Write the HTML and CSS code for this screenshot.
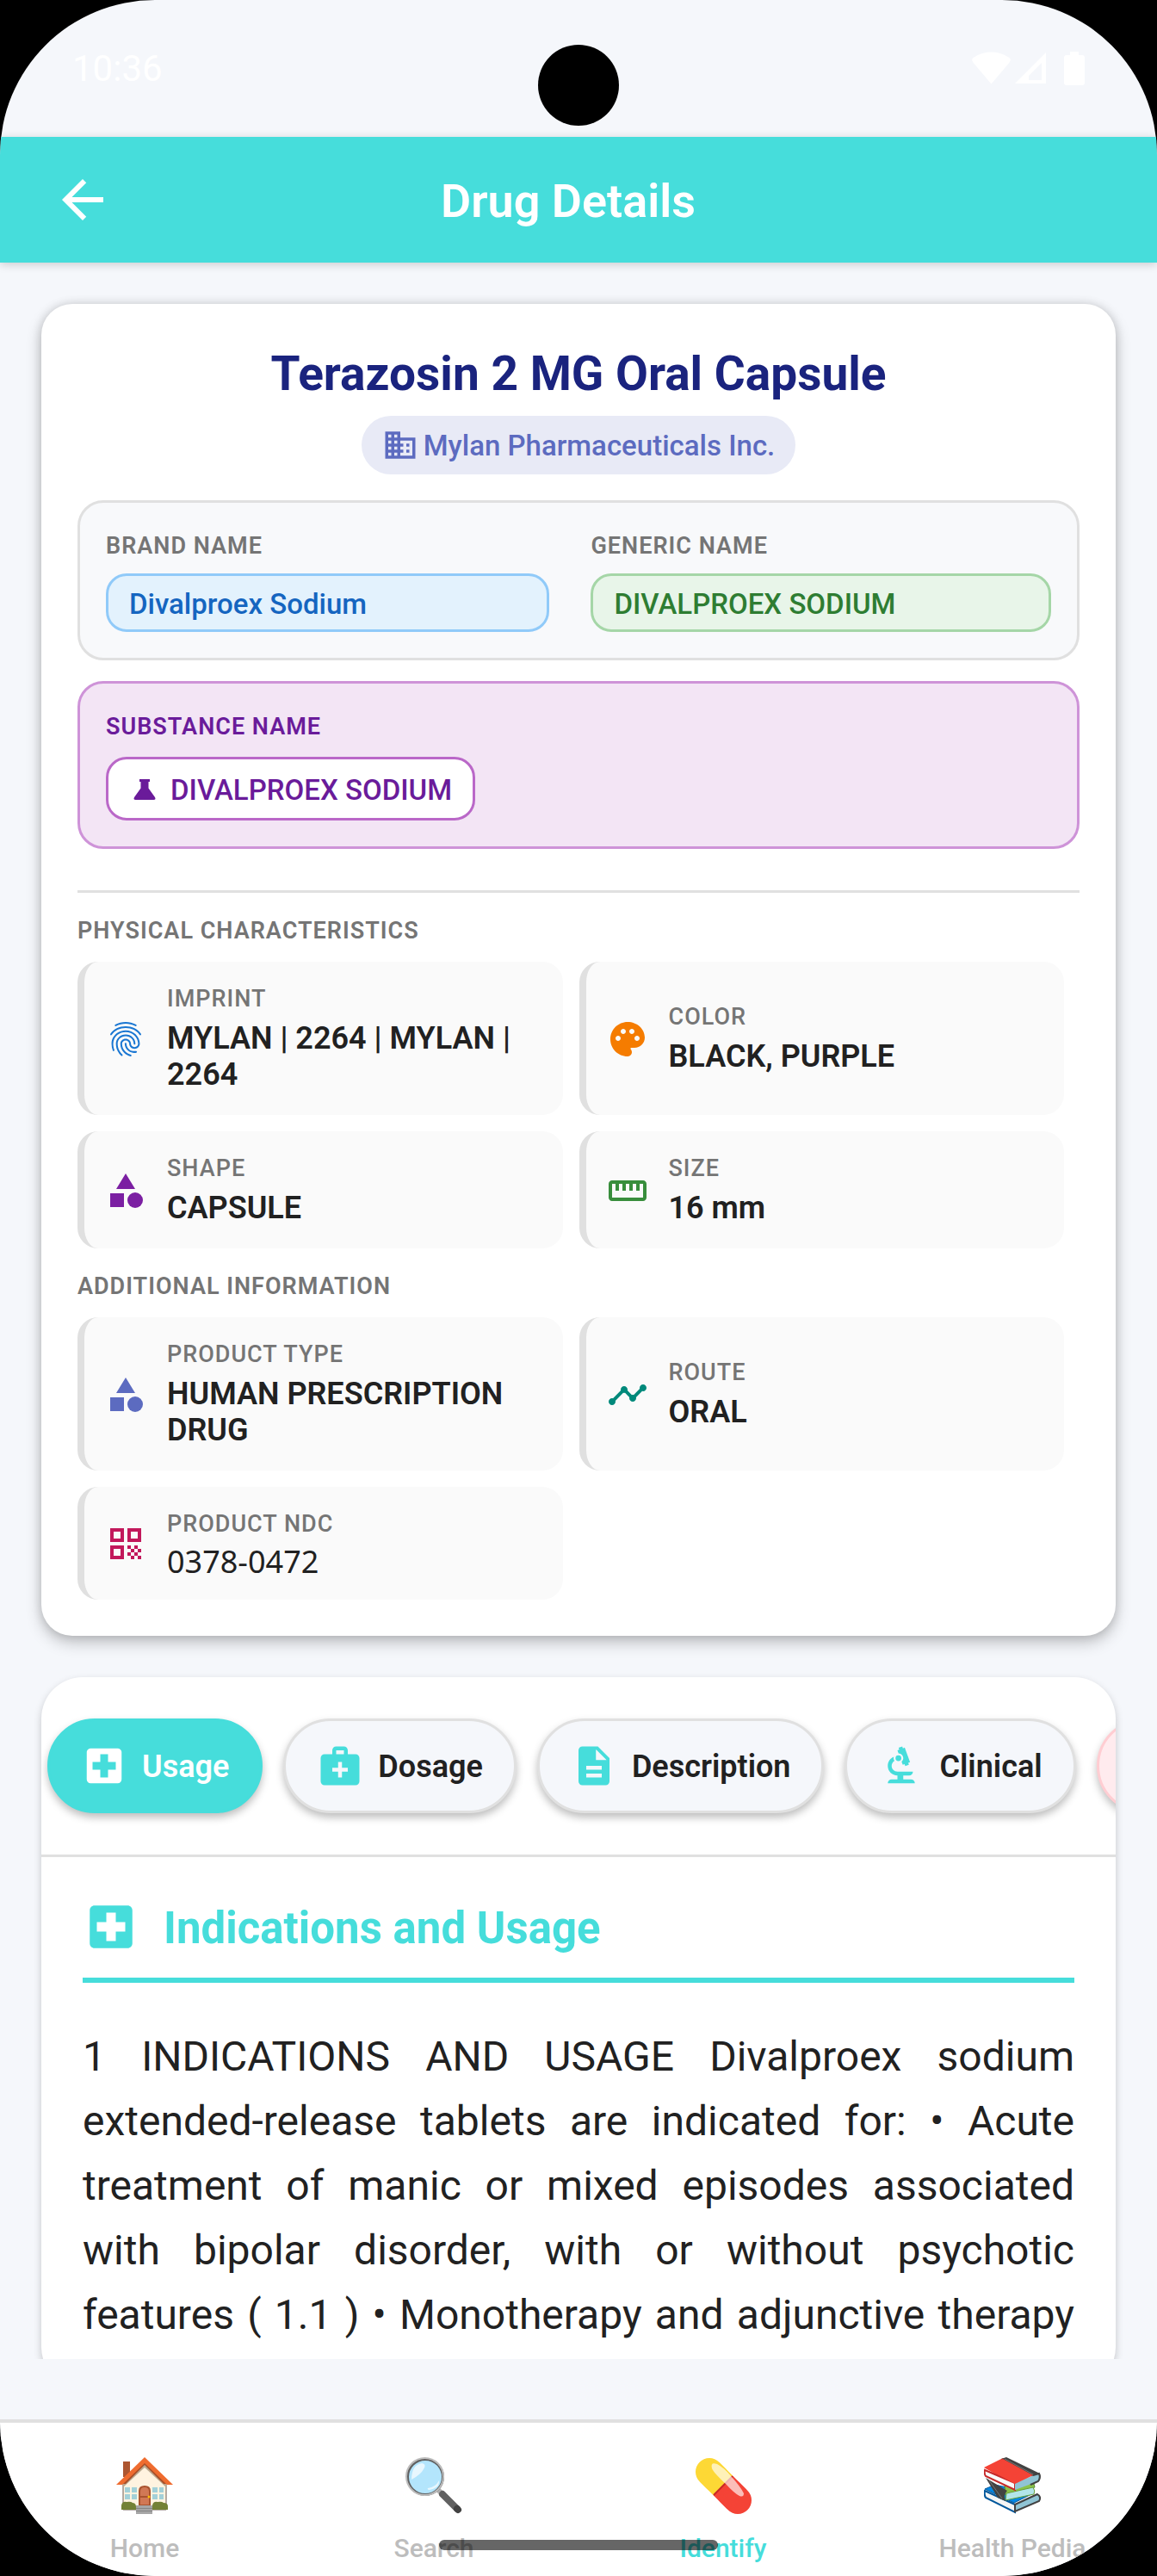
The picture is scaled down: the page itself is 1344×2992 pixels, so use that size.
FILE: index.html
```html
<!DOCTYPE html>
<html lang="en">

<head>
    <title>Drug Details</title>
    <meta charset="UTF-8">
    <meta name="viewport" content="width=device-width, initial-scale=1">
    <link rel="stylesheet" href="styles.css">
</head>

<body>
    <div class="screen">
        <div class="statusbar">
            <span class="time">10:36</span>
            <span class="camera"></span>
            <div class="sysicons">
                <svg class="wifi" viewBox="0 0 46 38"><path d="M23 38L2 13C-1 9 0 8 3 6C14-2 32-2 43 6c3 2 4 3 1 7z" /></svg>
                <svg class="signal" viewBox="0 0 36 36"><path fill-rule="evenodd" d="M36 0v36H0zM31 12L16 27v5h15z" /></svg>
                <svg class="battery" viewBox="0 0 24 39"><path d="M7 0h10v4h4q3 0 3 3v29q0 3-3 3H3q-3 0-3-3V7q0-3 3-3h4z" /></svg>
            </div>
        </div>

        <header class="topbar">
            <button class="back" type="button" aria-label="Back">
                <svg viewBox="0 0 24 24"><path d="M20 11H7.83l5.59-5.59L12 4l-8 8 8 8 1.41-1.41L7.83 13H20v-2z" /></svg>
            </button>
            <h1>Drug Details</h1>
            <span class="spacer"></span>
        </header>

        <main>
            <section class="card summary">
                <h2>Terazosin 2 MG Oral Capsule</h2>
                <div class="maker">
                    <svg viewBox="0 0 24 24"><path d="M12 7V3H2v18h20V7H12zM6 19H4v-2h2v2zm0-4H4v-2h2v2zm0-4H4V9h2v2zm0-4H4V5h2v2zm4 12H8v-2h2v2zm0-4H8v-2h2v2zm0-4H8V9h2v2zm0-4H8V5h2v2zm10 12h-8v-2h2v-2h-2v-2h2v-2h-2V9h8v10zm-2-8h-2v2h2v-2zm0 4h-2v2h2v-2z" /></svg>
                    <span>Mylan Pharmaceuticals Inc.</span>
                </div>

                <div class="box names">
                    <div>
                        <div class="label">BRAND NAME</div>
                        <div class="tag brand">Divalproex Sodium</div>
                    </div>
                    <div>
                        <div class="label">GENERIC NAME</div>
                        <div class="tag generic">DIVALPROEX SODIUM</div>
                    </div>
                </div>

                <div class="box substance">
                    <div class="label">SUBSTANCE NAME</div>
                    <div class="tag">
                        <svg viewBox="0 0 24 24"><path d="M8 4h8v2h-1v5l5 7q1 2-1 2H5q-2 0-1-2l5-7V6H8z" /></svg>
                        <span>DIVALPROEX SODIUM</span>
                    </div>
                </div>

                <hr>

                <h3>PHYSICAL CHARACTERISTICS</h3>
                <div class="facts">
                    <div class="fact">
                        <svg class="blue" viewBox="0 0 24 24"><path d="M17.81 4.47c-.08 0-.16-.02-.23-.06C15.66 3.42 14 3 12.01 3c-1.98 0-3.86.47-5.57 1.41-.24.13-.54.04-.68-.2-.13-.24-.04-.55.2-.68C7.82 2.52 9.86 2 12.01 2c2.13 0 3.99.47 6.03 1.52.25.13.34.43.21.67-.09.18-.26.28-.44.28zM3.5 9.72c-.1 0-.2-.03-.29-.09-.23-.16-.28-.47-.12-.7.99-1.4 2.25-2.5 3.75-3.27C9.98 4.04 14 4.03 17.15 5.65c1.5.77 2.76 1.86 3.75 3.25.16.22.11.54-.12.7-.23.16-.54.11-.7-.12-.9-1.26-2.04-2.25-3.39-2.94-2.87-1.47-6.54-1.47-9.4.01-1.36.7-2.5 1.7-3.4 2.96-.08.14-.23.21-.39.21zm6.25 12.07c-.13 0-.26-.05-.35-.15-.87-.87-1.34-1.43-2.01-2.64-.69-1.23-1.05-2.73-1.05-4.34 0-2.97 2.54-5.39 5.66-5.39s5.66 2.42 5.66 5.39c0 .28-.22.5-.5.5s-.5-.22-.5-.5c0-2.42-2.09-4.39-4.66-4.39-2.57 0-4.66 1.97-4.66 4.39 0 1.44.32 2.77.93 3.85.64 1.15 1.08 1.64 1.85 2.42.19.2.19.51 0 .71-.11.1-.24.15-.37.15zm7.17-1.85c-1.19 0-2.24-.3-3.1-.89-1.49-1.01-2.38-2.65-2.38-4.39 0-.28.22-.5.5-.5s.5.22.5.5c0 1.41.72 2.74 1.94 3.56.71.48 1.54.71 2.54.71.24 0 .64-.03 1.04-.1.27-.05.53.13.58.41.05.27-.13.53-.41.58-.57.11-1.07.12-1.21.12zM14.91 22c-.04 0-.09-.01-.13-.02-1.59-.44-2.63-1.03-3.72-2.1-1.4-1.39-2.17-3.24-2.17-5.22 0-1.62 1.38-2.94 3.08-2.94 1.7 0 3.08 1.32 3.08 2.94 0 1.07.93 1.94 2.08 1.94s2.08-.87 2.08-1.94c0-3.77-3.25-6.83-7.25-6.83-2.84 0-5.44 1.58-6.61 4.03-.39.81-.59 1.76-.59 2.8 0 .78.07 2.01.67 3.61.1.26-.03.55-.29.64-.26.1-.55-.04-.64-.29-.49-1.31-.73-2.61-.73-3.96 0-1.2.23-2.29.68-3.24 1.33-2.79 4.28-4.6 7.51-4.6 4.55 0 8.25 3.51 8.25 7.83 0 1.62-1.38 2.94-3.08 2.94s-3.08-1.32-3.08-2.94c0-1.07-.93-1.94-2.08-1.94s-2.08.87-2.08 1.94c0 1.71.66 3.31 1.87 4.51.95.94 1.86 1.46 3.27 1.85.27.07.42.35.35.61-.05.23-.26.38-.47.38z" /></svg>
                        <div>
                            <div class="name">IMPRINT</div>
                            <div class="value">MYLAN | 2264 | MYLAN | 2264</div>
                        </div>
                    </div>
                    <div class="fact">
                        <svg class="orange" viewBox="0 0 24 24"><path d="M12 2C6.49 2 2 6.49 2 12s4.49 10 10 10c1.38 0 2.5-1.12 2.5-2.5 0-.61-.23-1.2-.64-1.67-.08-.1-.13-.21-.13-.33 0-.28.22-.5.5-.5H16c3.31 0 6-2.69 6-6 0-4.96-4.49-9-10-9zm5.5 11c-.83 0-1.5-.67-1.5-1.5s.67-1.5 1.5-1.5 1.5.67 1.5 1.5-.67 1.5-1.5 1.5zm-3-4c-.83 0-1.5-.67-1.5-1.5S13.67 6 14.5 6s1.5.67 1.5 1.5S15.33 9 14.5 9zM5 11.5c0-.83.67-1.5 1.5-1.5s1.5.67 1.5 1.5S7.33 13 6.5 13 5 12.33 5 11.5zm6-4c0 .83-.67 1.5-1.5 1.5S8 8.33 8 7.5 8.67 6 9.5 6s1.5.67 1.5 1.5z" /></svg>
                        <div>
                            <div class="name">COLOR</div>
                            <div class="value">BLACK, PURPLE</div>
                        </div>
                    </div>
                    <div class="fact">
                        <svg class="purple" viewBox="0 0 24 24"><path d="M12 2l-5.5 9h11zM3 13.5h8v8H3z" /><circle cx="17.5" cy="17.5" r="4.5" /></svg>
                        <div>
                            <div class="name">SHAPE</div>
                            <div class="value">CAPSULE</div>
                        </div>
                    </div>
                    <div class="fact">
                        <svg class="green" viewBox="0 0 24 24"><path d="M21 6H3c-1.1 0-2 .9-2 2v8c0 1.1.9 2 2 2h18c1.1 0 2-.9 2-2V8c0-1.1-.9-2-2-2zm0 10H3V8h2v4h2V8h2v4h2V8h2v4h2V8h2v4h2V8h2v8z" /></svg>
                        <div>
                            <div class="name">SIZE</div>
                            <div class="value">16 mm</div>
                        </div>
                    </div>
                </div>

                <h3>ADDITIONAL INFORMATION</h3>
                <div class="facts">
                    <div class="fact">
                        <svg class="indigo" viewBox="0 0 24 24"><path d="M12 2l-5.5 9h11zM3 13.5h8v8H3z" /><circle cx="17.5" cy="17.5" r="4.5" /></svg>
                        <div>
                            <div class="name">PRODUCT TYPE</div>
                            <div class="value">HUMAN PRESCRIPTION DRUG</div>
                        </div>
                    </div>
                    <div class="fact">
                        <svg class="teal" viewBox="0 0 24 24"><path d="M23 8c0 1.1-.9 2-2 2-.18 0-.35-.02-.51-.07l-3.56 3.55c.05.16.07.34.07.52 0 1.1-.9 2-2 2s-2-.9-2-2c0-.18.02-.36.07-.52l-2.55-2.55c-.16.05-.34.07-.52.07s-.36-.02-.52-.07l-4.55 4.56c.05.16.07.33.07.51 0 1.1-.9 2-2 2s-2-.9-2-2 .9-2 2-2c.18 0 .35.02.51.07l4.56-4.55C8.02 9.36 8 9.18 8 9c0-1.1.9-2 2-2s2 .9 2 2c0 .18-.02.36-.07.52l2.55 2.55c.16-.05.34-.07.52-.07s.36.02.52.07l3.55-3.56C19.02 8.35 19 8.18 19 8c0-1.1.9-2 2-2s2 .9 2 2z" /></svg>
                        <div>
                            <div class="name">ROUTE</div>
                            <div class="value">ORAL</div>
                        </div>
                    </div>
                    <div class="fact">
                        <svg class="pink" viewBox="0 0 24 24"><path d="M3 11h8V3H3v8zm2-6h4v4H5V5zM3 21h8v-8H3v8zm2-6h4v4H5v-4zM13 3v8h8V3h-8zm6 6h-4V5h4v4zM19 19h2v2h-2zM13 13h2v2h-2zM15 15h2v2h-2zM13 17h2v2h-2zM15 19h2v2h-2zM17 17h2v2h-2zM17 13h2v2h-2zM19 15h2v2h-2z" /></svg>
                        <div>
                            <div class="name">PRODUCT NDC</div>
                            <div class="value code">0378-0472</div>
                        </div>
                    </div>
                </div>
            </section>

            <section class="card label-info">
                <div class="tabs">
                    <button class="tab active" type="button">
                        <svg viewBox="0 0 24 24"><path d="M19 3H5c-1.1 0-1.99.9-1.99 2L3 19c0 1.1.9 2 2 2h14c1.1 0 2-.9 2-2V5c0-1.1-.9-2-2-2zm-1 11h-4v4h-4v-4H6v-4h4V6h4v4h4v4z" /></svg>
                        <span>Usage</span>
                    </button>
                    <button class="tab" type="button">
                        <svg viewBox="0 0 24 24"><path d="M20 6h-4V4c0-1.1-.9-2-2-2h-4c-1.1 0-2 .9-2 2v2H4c-1.1 0-2 .9-2 2v12c0 1.1.9 2 2 2h16c1.1 0 2-.9 2-2V8c0-1.1-.9-2-2-2zM10 4h4v2h-4V4zm6 11h-3v3h-2v-3H8v-2h3v-3h2v3h3v2z" /></svg>
                        <span>Dosage</span>
                    </button>
                    <button class="tab" type="button">
                        <svg viewBox="0 0 24 24"><path d="M14 2H6c-1.1 0-1.99.9-1.99 2L4 20c0 1.1.89 2 1.99 2H18c1.1 0 2-.9 2-2V8l-6-6zm2 16H8v-2h8v2zm0-4H8v-2h8v2zm-3-5V3.5L18.5 9H13z" /></svg>
                        <span>Description</span>
                    </button>
                    <button class="tab" type="button">
                        <svg viewBox="0 0 24 24"><path d="M7 19c-1.1 0-2 .9-2 2h14c0-1.1-.9-2-2-2h-4v-2h3c1.1 0 2-.9 2-2h-8c-1.66 0-3-1.34-3-3 0-1.09.59-2.04 1.46-2.56C8.17 9.03 8 8.54 8 8c0-.21.04-.42.09-.62C6.28 8.13 5 9.92 5 12c0 2.76 2.24 5 5 5v2H7z" /><path d="M10.56 5.51C11.91 5.54 13 6.64 13 8c0 .75-.33 1.41-.85 1.87l.59 1.62.94-.34.34.94 1.88-.68-.34-.94.94-.34-2.74-7.52-.94.34-.34-.94-1.88.68.34.94-.94.35.56 1.53z" /><circle cx="10.5" cy="8" r="1.5" /></svg>
                        <span>Clinical</span>
                    </button>
                    <button class="tab warn" type="button" aria-label="Warnings"></button>
                </div>

                <article>
                    <h2>
                        <svg viewBox="0 0 24 24"><path d="M19 3H5c-1.1 0-1.99.9-1.99 2L3 19c0 1.1.9 2 2 2h14c1.1 0 2-.9 2-2V5c0-1.1-.9-2-2-2zm-1 11h-4v4h-4v-4H6v-4h4V6h4v4h4v4z" /></svg>
                        <span>Indications and Usage</span>
                    </h2>
                    <p>1 INDICATIONS AND USAGE Divalproex sodium extended-release tablets are indicated for: • Acute treatment of manic or mixed episodes associated with bipolar disorder, with or without psychotic features ( 1.1 ) • Monotherapy and adjunctive therapy</p>
                </article>
            </section>
        </main>

        <nav>
            <a href="#home">
                <svg viewBox="0 0 66 66">
                    <path fill="#ad5630" d="M8 5h8v18H8z" />
                    <path fill="#fff3e0" stroke="#6d5a50" d="M8 61V29L33 8l25 21v32z" />
                    <path fill="#bcaa91" d="M33 6L8 28v7l25-23 25 23v-7z" />
                    <path fill="#a84f29" d="M33 4L7 31h4l22-22 22 22h4z" />
                    <path fill="#ef6c2f" d="M33 0L0 32h7L33 7l26 25h7z" />
                    <path fill="#a3d0d8" d="M10 35h6v6h-6zM18 35h6v6h-6zM10 43h6v6h-6zM18 43h6v6h-6zM42 35h6v6h-6zM50 35h5v6h-5zM42 43h6v6h-6zM50 43h5v6h-5z" />
                    <path fill="#a9532f" d="M26 57V39q0-6 7-6t7 6v18z" />
                    <path fill="#d17855" d="M28 45v-5q0-5 5-5t5 5v5zM28 47h10v8H28z" />
                    <circle fill="#ffc107" cx="38" cy="46" r="1.5" />
                    <path fill="#738136" d="M6 61v-5q1-5 6-4 5-1 7 1 5 0 4 8zM42 61v-5q1-5 6-4 5-1 7 1 5 0 5 4v4z" />
                    <path fill="#a6a6a6" d="M23 56h19v10H23z" />
                    <path stroke="#858585" d="M23 59.500h19M23 62.500h19" />
                </svg>
                <span>Home</span>
            </a>
            <a href="#search">
                <svg viewBox="0 0 66 66">
                    <path stroke="#b0b0b0" stroke-width="6" d="M36 36l7 7" />
                    <path stroke="#616161" stroke-width="8" stroke-linecap="round" d="M43 43l17 17" />
                    <path stroke="#424242" stroke-width="8" stroke-linecap="round" d="M60 60l1 1" />
                    <circle fill="#b3e5fc" stroke="#616161" stroke-width="3" cx="23" cy="23" r="20.500" />
                    <circle fill="none" stroke="#bdbdbd" stroke-width="2" cx="22.500" cy="22.500" r="21.500" />
                    <path fill="#e8f7fe" d="M7 26Q7 9 19 7q6 1 2 7-3 6-14 12zM26 36q9-1 13-9 1 9-11 11-3 0-2-2z" />
                </svg>
                <span>Search</span>
            </a>
            <a class="active" href="#identify">
                <svg viewBox="0 0 66 66">
                    <path stroke="#fdd835" stroke-width="32" stroke-linecap="round" d="M17 17l8 8" />
                    <path stroke="#f44336" stroke-width="32" stroke-linecap="round" d="M41 41l9 9" />
                    <path stroke="#fdd835" stroke-width="32" d="M17 17l16 16" />
                    <path stroke="#f44336" stroke-width="32" d="M33 33l16 16" />
                    <path stroke="#c62828" stroke-width="2" d="M22 44l22-22" />
                    <path fill="#fff" fill-opacity=".65" d="M20 13q-2-8 6-5 8 4 17 15 10 11 14 19 0 5-5 3-6-3-16-14Q22 18 20 13z" />
                </svg>
                <span>Identify</span>
            </a>
            <a href="#pedia">
                <svg viewBox="0 0 66 66">
                    <path fill="#0288e5" stroke="#01579b" d="M1 37l12-5 44 10-22 11z" />
                    <path fill="#f5f5f5" stroke="#01579b" stroke-width="2" d="M1 39q-1 5 1 8l34 17v-9z" />
                    <path fill="#90c4d4" stroke="#424242" stroke-width="2" d="M36 55l26-12q5 3 2 8L36 63z" />
                    <path fill="#8bc34a" stroke="#558b2f" d="M24 33l34-2 1 4-34 9z" />
                    <path fill="#b2e5ea" stroke="#689f38" d="M26 42l31-7q3 4 1 8l-33 7z" />
                    <path fill="#424242" d="M2 24l25 15q-5 5-2 12l-9-4z" />
                    <path stroke="#757575" d="M6 27l15 21" />
                    <path fill="#f44336" d="M0 12L22 1l36 19-23 12z" />
                    <path fill="#424242" d="M20 2l6-2 39 19q2 5-1 9-1-5-8-5z" />
                    <path stroke="#757575" d="M24 2l35 19" />
                    <path fill="#fafafa" stroke="#c62828" stroke-width="2" d="M1 15q-1 4 1 7l34 16v-8z" />
                    <path fill="#90c4d4" d="M36 30l27-11q3 4 0 9L36 38z" />
                    <path fill="none" stroke="#424242" stroke-width="2" d="M57 21l7-2q2 5-1 9l-9 4" />
                    <path fill="#f44336" d="M1 12l21-10 35 19-21 10z" />
                </svg>
                <span>Health Pedia</span>
            </a>
        </nav>
        <div class="gesture"></div>
    </div>
</body>

</html>
```

FILE: styles.css
```css
* {
    box-sizing: border-box;
    padding: 0;
    margin: 0;
}

body {
    font-family: Roboto, sans-serif;
    color: #212121;
    background: #000;
}

svg {
    display: block;
    flex: none;
    fill: currentColor;
}

.screen {
    position: relative;
    display: flex;
    flex-direction: column;
    height: 100vh;
    border-radius: 180px;
    background: #f5f7fb;
    overflow: hidden;
}

/* status bar */

.statusbar {
    position: relative;
    display: flex;
    flex: none;
    justify-content: space-between;
    height: 159px;
    padding: 54px 84px 0;
    color: #fff;
}

.time {
    font-size: 42px;
    line-height: 52px;
}

.camera {
    position: absolute;
    top: 52px;
    left: 50%;
    width: 94px;
    height: 94px;
    border-radius: 50%;
    background: #000;
    transform: translateX(-50%);
}

.sysicons {
    display: flex;
    align-items: center;
    height: 50px;
    gap: 5px;
}

.wifi {
    width: 45px;
    height: 38px;
}

.signal {
    width: 36px;
    height: 36px;
}

.battery {
    width: 24px;
    height: 39px;
    margin-left: 16px;
}

/* header */

.topbar {
    position: relative;
    z-index: 2;
    display: flex;
    flex: none;
    align-items: center;
    justify-content: space-between;
    height: 146px;
    padding: 0 60px;
    color: #fff;
    background: #46dddb;
    box-shadow: 0 2px 10px rgba(0, 0, 0, .18);
}

.topbar h1 {
    padding-top: 3px;
    font-size: 54px;
    font-weight: 600;
    line-height: 64px;
}

.back {
    border: 0;
    color: inherit;
    background: none;
}

.back svg {
    width: 72px;
    height: 72px;
}

.spacer {
    width: 96px;
}

main {
    display: flex;
    flex: 1;
    flex-direction: column;
    gap: 48px;
    min-height: 0;
    margin-bottom: 70px;
    padding: 48px 48px 0;
    overflow: hidden;
}

.card {
    flex: none;
    background: #fff;
}

/* drug summary */

.summary {
    padding: 42px;
    border-radius: 36px;
    box-shadow: 0 8px 18px rgba(0, 0, 0, .22), 0 0 12px rgba(0, 0, 0, .14);
}

.summary h2 {
    margin-bottom: 9px;
    font-size: 55px;
    font-weight: 700;
    line-height: 79px;
    text-align: center;
    color: #1a237e;
}

.maker {
    display: flex;
    align-items: center;
    gap: 6px;
    width: fit-content;
    height: 68px;
    margin: 0 auto 30px;
    padding: 0 24px;
    border-radius: 36px;
    font-size: 33px;
    font-weight: 500;
    color: #5c6bc0;
    background: #e8eaf6;
}

.maker svg {
    width: 42px;
    height: 42px;
}

.box {
    padding: 34px 30px 30px;
    border: 3px solid #e0e0e0;
    border-radius: 30px;
    background: #f8f9fb;
}

.names {
    display: grid;
    grid-template-columns: 27fr 28fr;
    gap: 48px;
    margin-bottom: 24px;
}

.label {
    margin-bottom: 15px;
    font-size: 27px;
    font-weight: 600;
    line-height: 33px;
    letter-spacing: 1px;
    color: #757575;
}

.tag {
    display: flex;
    align-items: center;
    height: 68px;
    padding: 2px 24px 0;
    border: 3px solid;
    border-radius: 24px;
    font-size: 33px;
    font-weight: 500;
}

.brand {
    border-color: #90caf9;
    color: #1565c0;
    background: #e3f2fd;
}

.generic {
    border-color: #a5d6a7;
    color: #2e7d32;
    background: #e8f5e9;
}

.substance {
    border-color: #ce93d8;
    background: #f3e5f5;
}

.substance .label {
    margin-bottom: 18px;
    color: #6a1b9a;
}

.substance .tag {
    gap: 12px;
    width: fit-content;
    height: 74px;
    border-color: #ba68c8;
    color: #6a1b9a;
    background: #fff;
}

.substance svg {
    width: 36px;
    height: 36px;
}

hr {
    height: 3px;
    margin-top: 48px;
    border: 0;
    background: #e0e0e0;
}

h3 {
    margin: 28px 0 20px;
    font-size: 27px;
    font-weight: 600;
    line-height: 32px;
    letter-spacing: 1px;
    color: #757575;
}

.facts {
    display: grid;
    grid-template-columns: repeat(2, 1fr);
    gap: 19px;
    margin-right: 18px;
}

.fact {
    display: flex;
    align-items: center;
    gap: 24px;
    padding: 27px 24px 26px;
    border-left: 8px solid #e0e0e0;
    border-radius: 24px;
    background: #fafafa;
}

.fact svg {
    width: 48px;
    height: 48px;
}

.blue { color: #1976d2; }
.orange { color: #f57c00; }
.purple { color: #7b1fa2; }
.green { color: #388e3c; }
.indigo { color: #5c6bc0; }
.teal { color: #00897b; }
.pink { color: #c2185b; }

.name {
    margin-bottom: 9px;
    font-size: 27px;
    font-weight: 500;
    line-height: 32px;
    letter-spacing: 1px;
    color: #757575;
}

.value {
    font-size: 36px;
    font-weight: 600;
    line-height: 42px;
}

.code {
    font-family: "Noto Sans", sans-serif;
    font-weight: 400;
    line-height: 37px;
}

/* label sections */

.label-info {
    border-radius: 48px;
    box-shadow: 0 4px 10px rgba(0, 0, 0, .2);
}

.tabs {
    display: flex;
    gap: 24px;
    padding: 48px 0 48px 7px;
    border-bottom: 3px solid #e0e0e0;
    border-radius: 48px 48px 0 0;
    overflow: hidden;
}

.tab {
    display: flex;
    flex: none;
    align-items: center;
    gap: 17px;
    height: 110px;
    padding: 0 36px;
    border: 3px solid #e0e0e0;
    border-radius: 55px;
    font-family: inherit;
    font-size: 36px;
    font-weight: 600;
    color: #212121;
    background: #f5f7fb;
    box-shadow: 0 5px 10px rgba(0, 0, 0, .26);
}

.tab svg {
    width: 54px;
    height: 54px;
    color: #46dddb;
}

.tab span {
    padding-top: 2px;
}

.tab.active {
    border-color: #46dddb;
    color: #fff;
    background: #46dddb;
}

.tab.active svg {
    color: #fff;
}

.tab.warn {
    width: 300px;
    border-color: #ffcdd2;
    background: #ffebee;
}

article {
    padding: 48px;
}

article h2 {
    display: flex;
    align-items: center;
    gap: 28px;
    margin-bottom: 48px;
    padding-bottom: 26px;
    border-bottom: 6px solid #46dddb;
    font-size: 51px;
    font-weight: 700;
    color: #46dddb;
}

article h2 svg {
    width: 66px;
    height: 66px;
}

article h2 span {
    padding-top: 3px;
}

article p {
    font-size: 48px;
    line-height: 75px;
    text-align: justify;
    text-align-last: justify;
}

/* bottom navigation */

nav {
    display: grid;
    flex: none;
    grid-template-columns: repeat(4, 1fr);
    height: 182px;
    padding-top: 40px;
    border-top: 4px solid #e0e0e0;
    background: #fff;
}

nav a {
    display: flex;
    flex-direction: column;
    align-items: center;
    gap: 22px;
    font-size: 30px;
    font-weight: 500;
    line-height: 36px;
    text-decoration: none;
    color: #bdbdbd;
}

nav a.active {
    color: #46dddb;
}

nav svg {
    width: 66px;
    height: 66px;
}

.gesture {
    position: absolute;
    bottom: 30px;
    left: 50%;
    width: 324px;
    height: 12px;
    border-radius: 6px;
    background: rgba(0, 0, 0, .6);
    transform: translateX(-50%);
}
```
